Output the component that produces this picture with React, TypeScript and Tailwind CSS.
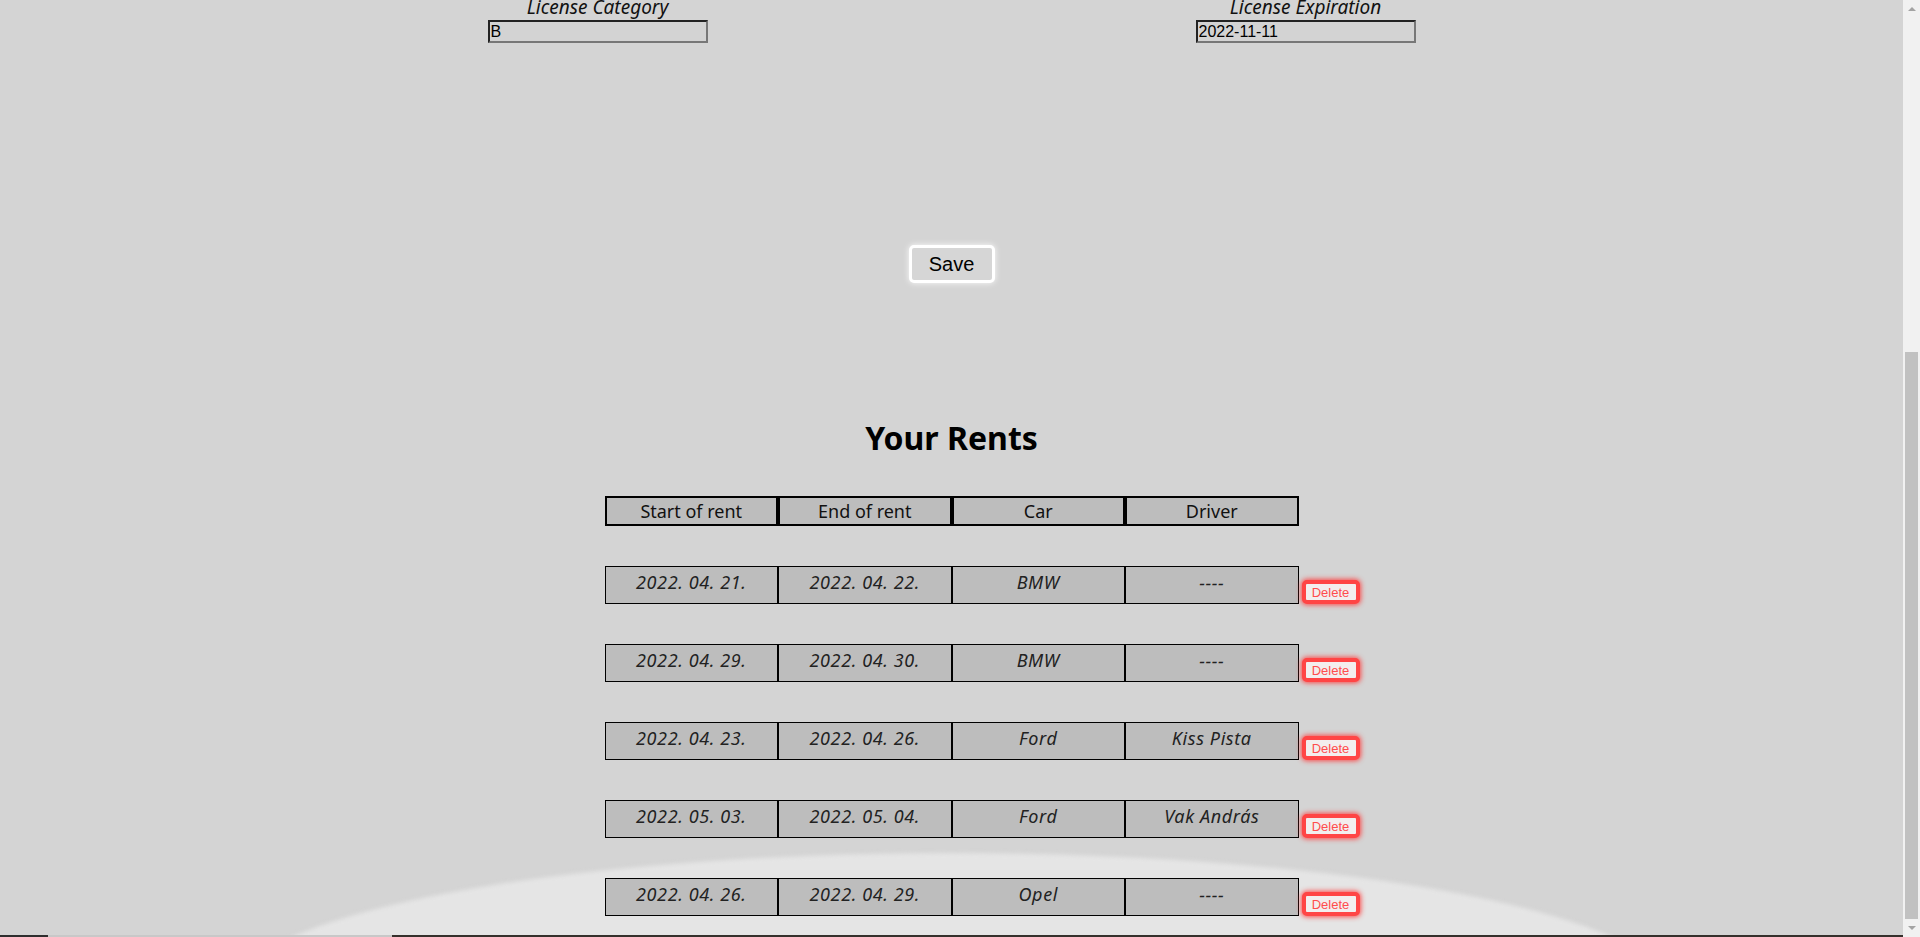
import React from 'react';

type Rent = { start: string; end: string; car: string; driver: string };

const RENTS: Rent[] = [
  { start: '2022. 04. 21.', end: '2022. 04. 22.', car: 'BMW', driver: '----' },
  { start: '2022. 04. 29.', end: '2022. 04. 30.', car: 'BMW', driver: '----' },
  { start: '2022. 04. 23.', end: '2022. 04. 26.', car: 'Ford', driver: 'Kiss Pista' },
  { start: '2022. 05. 03.', end: '2022. 05. 04.', car: 'Ford', driver: 'Vak András' },
  { start: '2022. 04. 26.', end: '2022. 04. 29.', car: 'Opel', driver: '----' },
];

const HEADERS = ['Start of rent', 'End of rent', 'Car', 'Driver'];

const segoe = "font-['Noto_Sans',sans-serif]";
const arial = "font-['Liberation_Sans',Arial,sans-serif]";

function Field({ label, value }: { label: string; value: string }) {
  return (
    <div className="w-[708px] flex flex-col items-center">
      <span className={`${segoe} italic text-[19px] leading-[25px] text-[#111]`}>{label}</span>
      <input
        readOnly
        value={value}
        className={`${arial} w-[220px] h-[23px] px-[1px] text-[16px] leading-none text-black bg-[#d3d3d3] border-2 border-t-[#222] border-l-[#222] border-r-[#777] border-b-[#777] outline-none`}
      />
    </div>
  );
}

function RentRow({ rent }: { rent: Rent }) {
  const cells = [rent.start, rent.end, rent.car, rent.driver];
  return (
    <div className="grid grid-cols-[1fr_694px_1fr]">
      <div />
      <div className="flex">
        {cells.map((c, i) => (
          <div
            key={i}
            className={`${segoe} w-[173.5px] h-[38px] pt-[3px] border border-black bg-[#bdbdbd] text-center italic text-[18px] tracking-[0.6px] leading-[25px] text-[#222]`}
          >
            {c}
          </div>
        ))}
      </div>
      <div className="self-end pl-[3px]">
        <button
          className={`${arial} w-[58px] h-[24px] border-[4px] border-[#ff4545] rounded-[5px] bg-[#f3eeee] text-[13px] leading-none text-[#ff4d4d] shadow-[0_0_5px_1px_rgba(255,60,60,0.9)]`}
        >
          Delete
        </button>
      </div>
    </div>
  );
}

export default function App() {
  return (
    <div className="h-[937px] w-full flex overflow-hidden bg-[#d4d4d4]">
      <div className="relative flex-1 flex flex-col">
        <div className="absolute left-1/2 -translate-x-1/2 top-[853px] w-[1440px] h-[280px] rounded-[50%] bg-[#e5e5e5] blur-[2px]" />

        <div className="relative flex flex-col">
          <div className="flex justify-center -mt-[5px]">
            <Field label="License Category" value="B" />
            <Field label="License Expiration" value="2022-11-11" />
          </div>

          <div className="flex justify-center mt-[202px]">
            <button
              className={`${arial} w-[86px] h-[38px] border-[3px] border-white rounded-[5px] bg-[#d6d6d6] text-[20px] text-black shadow-[0_0_6px_rgba(255,255,255,0.9)]`}
            >
              Save
            </button>
          </div>

          <h2 className={`${segoe} mt-[135px] text-center font-bold text-[32px] leading-[40px] text-black`}>
            Your Rents
          </h2>

          <div className="flex justify-center mt-[38px]">
            {HEADERS.map((h) => (
              <div
                key={h}
                className={`${segoe} w-[173.5px] h-[30px] border-2 border-black bg-[#bdbdbd] text-center text-[18px] leading-[26px] text-[#111]`}
              >
                {h}
              </div>
            ))}
          </div>

          <div className="flex flex-col gap-[40px] mt-[40px]">
            {RENTS.map((r, i) => (
              <RentRow key={i} rent={r} />
            ))}
          </div>
        </div>

        <div className="relative mt-auto h-[2px] flex">
          <div className="w-[48px] bg-[#2e2e2e]" />
          <div className="w-[344px] bg-[#c8c8c8]" />
          <div className="flex-1 bg-[#35302c]" />
        </div>
      </div>

      <div className="w-[17px] bg-[#f1f1f1] flex flex-col">
        <div className="h-[17px] flex items-center justify-center">
          <div className="w-0 h-0 border-x-[4px] border-x-transparent border-b-[4px] border-b-[#a3a3a3]" />
        </div>
        <div className="h-[335px]" />
        <div className="flex-1 mx-[2px] bg-[#c1c1c1]" />
        <div className="h-[18px] flex items-center justify-center">
          <div className="w-0 h-0 border-x-[4px] border-x-transparent border-t-[4px] border-t-[#a3a3a3]" />
        </div>
      </div>
    </div>
  );
}
